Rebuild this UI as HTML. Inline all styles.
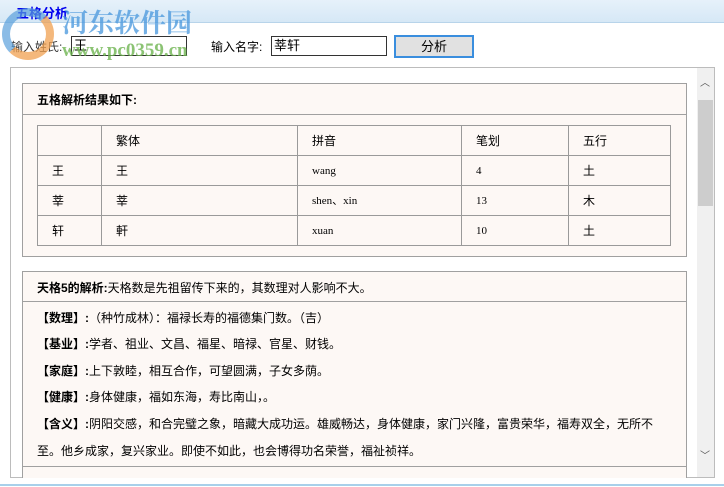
<!DOCTYPE html>
<html><head><meta charset="utf-8"><style>
*{margin:0;padding:0;box-sizing:border-box}
body{width:724px;height:487px;overflow:hidden;background:#fff;font-family:"Liberation Sans","Noto Sans CJK SC","WenQuanYi Zen Hei",sans-serif;font-size:12px;color:#000;position:relative}
.abs{position:absolute}
.title{left:0;top:0;width:724px;height:23px;background:linear-gradient(#e6f1fa,#d6e8f6);border-bottom:1px solid #b8d4ea}
.title span{position:absolute;left:16px;top:3px;color:#0000ee;font-weight:bold;font-size:13px}
.wm1{left:62px;top:7px;font-size:26px;font-weight:bold;color:rgba(70,150,220,.75);font-family:"Noto Serif CJK SC","Noto Sans CJK SC",serif;line-height:30px}
.wm2{left:62px;top:40px;font-size:19px;font-weight:bold;color:rgba(110,180,80,.8);font-family:"Liberation Serif",serif}
.logo{left:2px;top:8px;width:52px;height:52px;border-radius:50%;border:8px solid rgba(90,160,220,.7);border-right-color:rgba(240,160,80,.75);border-bottom-color:rgba(240,160,80,.75)}
.inp{border:1px solid #333;height:20px;background:#fff;font-size:13px;padding:1px 2px;line-height:16px}
.btn{left:394px;top:35px;width:80px;height:23px;border:2px solid #3a8ede;background:#e1e1e1;text-align:center;line-height:19px;font-size:13px}
.outer{left:10px;top:67px;width:705px;height:411px;border:1px solid #bcbcbc}
.sb{left:697px;top:68px;width:17px;height:409px;background:#f0f0f0}
.thumb{left:698px;top:100px;width:15px;height:106px;background:#cdcdcd}
.box{left:22px;top:83px;width:665px;border:1px solid #a0a0a0;background:#fdf8f5}
table{border-collapse:collapse;position:absolute;left:37px;top:125px;width:634px;background:#fdf8f5}
td{border:1px solid #9a9a9a;height:30px;padding-left:14px;font-size:12px;vertical-align:middle;line-height:14px}
td.m{font-family:"Liberation Serif","Noto Sans CJK SC",serif;font-size:11px}
.ln{position:absolute;left:37px;font-size:12px}
</style></head><body>
<div class="abs title"><span>五格分析</span></div>
<div class="abs" style="left:11px;top:38px;color:#333">输入姓氏:</div>
<div class="abs inp" style="left:71px;top:36px;width:116px">王</div>
<div class="abs" style="left:211px;top:38px">输入名字:</div>
<div class="abs inp" style="left:271px;top:36px;width:116px">莘轩</div>
<div class="abs btn">分析</div>
<div class="abs logo"></div>
<div class="abs wm1">河东软件园</div>
<div class="abs wm2">www.pc0359.cn</div>
<div class="abs outer"></div>
<div class="abs sb"></div>
<div class="abs thumb"></div>
<div class="abs" style="left:700px;top:74px;font-size:10px;color:#555">︿</div>
<div class="abs" style="left:700px;top:447px;font-size:10px;color:#555">﹀</div>

<div class="abs box" style="top:83px;height:174px"></div>
<div class="abs" style="left:22px;top:114px;width:665px;border-top:1px solid #a0a0a0"></div>
<div class="ln" style="top:91px;font-weight:bold">五格解析结果如下:</div>
<table>
<tr><td style="width:64px"></td><td style="width:196px">繁体</td><td style="width:164px">拼音</td><td style="width:107px">笔划</td><td>五行</td></tr>
<tr><td>王</td><td>王</td><td class="m">wang</td><td class="m">4</td><td>土</td></tr>
<tr><td>莘</td><td>莘</td><td class="m">shen、xin</td><td class="m">13</td><td>木</td></tr>
<tr><td>轩</td><td>軒</td><td class="m">xuan</td><td class="m">10</td><td>土</td></tr>
</table>

<div class="abs box" style="top:271px;height:207px;border-bottom:none"></div>
<div class="abs" style="left:22px;top:301px;width:665px;border-top:1px solid #a0a0a0"></div>
<div class="abs" style="left:22px;top:466px;width:665px;border-top:1px solid #a0a0a0"></div>
<div class="ln" style="top:279px"><b>天格5的解析:</b>天格数是先祖留传下来的，其数理对人影响不大。</div>
<div class="ln" style="top:309px"><b>【数理】:</b>（种竹成林）：福禄长寿的福德集门数。（吉）</div>
<div class="ln" style="top:335px"><b>【基业】:</b>学者、祖业、文昌、福星、暗禄、官星、财钱。</div>
<div class="ln" style="top:362px"><b>【家庭】:</b>上下敦睦，相互合作，可望圆满，子女多荫。</div>
<div class="ln" style="top:388px"><b>【健康】:</b>身体健康，福如东海，寿比南山，。</div>
<div class="ln" style="top:415px"><b>【含义】:</b>阴阳交感，和合完璧之象，暗藏大成功运。雄威畅达，身体健康，家门兴隆，富贵荣华，福寿双全，无所不</div>
<div class="ln" style="top:442px">至。他乡成家，复兴家业。即使不如此，也会博得功名荣誉，福祉祯祥。</div>
<div class="abs" style="left:0;top:484px;width:724px;border-top:2px solid #a8d0ea"></div>
</body></html>
